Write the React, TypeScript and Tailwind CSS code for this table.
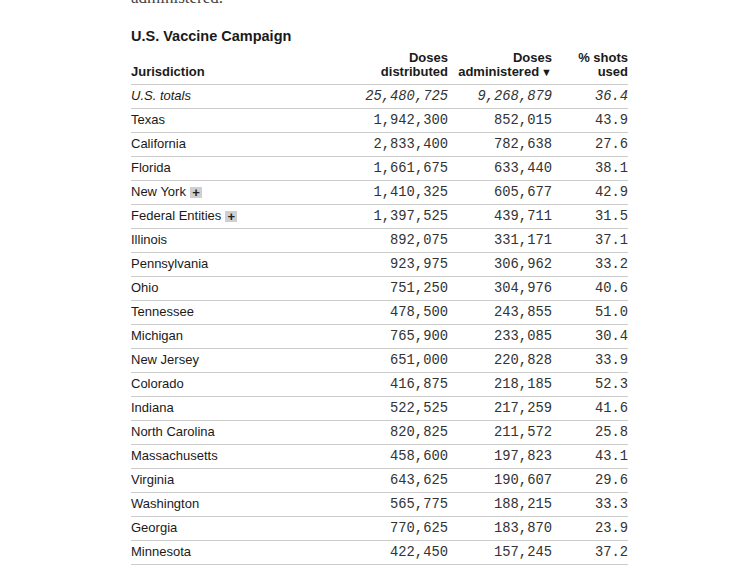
import React from "react";

type Row = {
  name: string;
  distributed: string;
  administered: string;
  used: string;
  expandable?: boolean;
  total?: boolean;
};

const rows: Row[] = [
  { name: "U.S. totals", distributed: "25,480,725", administered: "9,268,879", used: "36.4", total: true },
  { name: "Texas", distributed: "1,942,300", administered: "852,015", used: "43.9" },
  { name: "California", distributed: "2,833,400", administered: "782,638", used: "27.6" },
  { name: "Florida", distributed: "1,661,675", administered: "633,440", used: "38.1" },
  { name: "New York", distributed: "1,410,325", administered: "605,677", used: "42.9", expandable: true },
  { name: "Federal Entities", distributed: "1,397,525", administered: "439,711", used: "31.5", expandable: true },
  { name: "Illinois", distributed: "892,075", administered: "331,171", used: "37.1" },
  { name: "Pennsylvania", distributed: "923,975", administered: "306,962", used: "33.2" },
  { name: "Ohio", distributed: "751,250", administered: "304,976", used: "40.6" },
  { name: "Tennessee", distributed: "478,500", administered: "243,855", used: "51.0" },
  { name: "Michigan", distributed: "765,900", administered: "233,085", used: "30.4" },
  { name: "New Jersey", distributed: "651,000", administered: "220,828", used: "33.9" },
  { name: "Colorado", distributed: "416,875", administered: "218,185", used: "52.3" },
  { name: "Indiana", distributed: "522,525", administered: "217,259", used: "41.6" },
  { name: "North Carolina", distributed: "820,825", administered: "211,572", used: "25.8" },
  { name: "Massachusetts", distributed: "458,600", administered: "197,823", used: "43.1" },
  { name: "Virginia", distributed: "643,625", administered: "190,607", used: "29.6" },
  { name: "Washington", distributed: "565,775", administered: "188,215", used: "33.3" },
  { name: "Georgia", distributed: "770,625", administered: "183,870", used: "23.9" },
  { name: "Minnesota", distributed: "422,450", administered: "157,245", used: "37.2" },
];

// mono figures sit a touch lower than the sans names to share a baseline
const num = "p-0 pt-[1px] pb-[1px] align-middle text-right font-['Liberation_Mono',monospace] text-[13.8px] leading-[21px] text-[#333]";

export default function App() {
  return (
    <div className="min-h-screen bg-white font-['Liberation_Sans',Arial,sans-serif] text-[#1a1a1a] overflow-hidden">
      <div className="ml-[131px] w-[497px]">
        {/* tail of the article paragraph above */}
        <p className="-mt-[14px] font-['Liberation_Serif',serif] text-[17px] leading-[24px] text-[#444]">
          administered.
        </p>

        <h2 className="mt-[16px] text-[14.5px] leading-[20px] font-bold">U.S. Vaccine Campaign</h2>

        <table className="mt-[5px] w-full border-collapse text-[13px]">
          <thead>
            <tr className="border-b border-[#ccc]">
              <th className="pb-[5px] text-left align-bottom font-bold leading-[14px]">Jurisdiction</th>
              <th className="w-[120px] pb-[5px] text-right align-bottom font-bold leading-[14px]">
                Doses
                <br />
                distributed
              </th>
              <th className="w-[104px] pb-[5px] text-right align-bottom font-bold leading-[14px]">
                Doses
                <br />
                administered
                <span className="ml-[2px] text-[11px]">▼</span>
              </th>
              <th className="w-[76px] pb-[5px] text-right align-bottom font-bold leading-[14px]">
                % shots
                <br />
                used
              </th>
            </tr>
          </thead>
          <tbody>
            {rows.map((r) => (
              <tr key={r.name} className="h-[24px] border-b border-[#ccc]">
                <td className={`p-0 pb-[2px] align-middle leading-[21px] ${r.total ? "italic" : ""}`}>
                  {r.name}
                  {r.expandable && (
                    <span className="ml-[4px] inline-flex h-[11px] w-[12px] items-center justify-center bg-[#cfcfcf] align-[-1px] text-[13px] font-bold leading-none text-[#222]">
                      +
                    </span>
                  )}
                </td>
                <td className={`${num} ${r.total ? "italic" : ""}`}>{r.distributed}</td>
                <td className={`${num} ${r.total ? "italic" : ""}`}>{r.administered}</td>
                <td className={`${num} ${r.total ? "italic" : ""}`}>{r.used}</td>
              </tr>
            ))}
          </tbody>
        </table>
      </div>
    </div>
  );
}
